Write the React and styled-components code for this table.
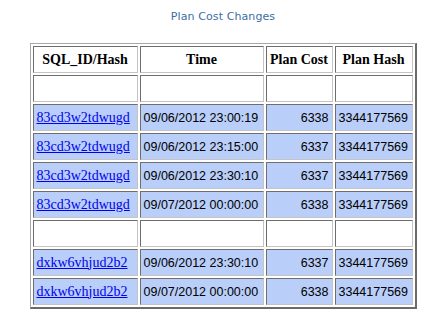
import React from 'react';
import styled, { createGlobalStyle } from 'styled-components';

const GlobalStyle = createGlobalStyle`
  html, body {
    margin: 0;
    padding: 0;
    background: #fff;
  }
`;

const Page = styled.div`
  width: 430px;
  height: 330px;
  box-sizing: border-box;
  padding: 10px 0 0 16px;
  display: flex;
  flex-direction: column;
  align-items: center;
`;

const Title = styled.div`
  font-family: "DejaVu Sans", Verdana, sans-serif;
  font-size: 11px;
  line-height: 13px;
  letter-spacing: 0.1px;
  color: #3a6ea5;
  margin-bottom: 20px;
`;

const Table = styled.table`
  border-collapse: separate;
  border-spacing: 2px;
  table-layout: fixed;
  border-top: 1px solid #a8a8a8;
  border-left: 1px solid #a8a8a8;
  border-right: 2px solid #6a6a6a;
  border-bottom: 2px solid #6a6a6a;
`;

const Row = styled.tr`
  background: ${(p) => (p.$blank ? '#fff' : '#b9cef8')};
`;

const Cell = styled.td`
  box-sizing: border-box;
  height: 27px;
  padding: 0 3px;
  border-top: 1px solid #6e6e6e;
  border-left: 1px solid #6e6e6e;
  border-right: 1px solid #c4c4c4;
  border-bottom: 1px solid #c4c4c4;
  white-space: nowrap;
  text-align: ${(p) => p.$align || 'left'};
  font-family: ${(p) => (p.$serif ? '"Liberation Serif", "Times New Roman", serif' : '"Liberation Sans", Arial, sans-serif')};
  font-size: ${(p) => (p.$serif ? '14px' : '12.5px')};
  color: #000;
`;

const HeadCell = styled(Cell).attrs({ as: 'th' })`
  font-family: "Liberation Serif", "Times New Roman", serif;
  font-size: 14px;
  font-weight: bold;
  text-align: center;
  background: #fff;
`;

const SqlLink = styled.a`
  color: #0000ee;
  text-decoration: underline;
`;

const rows = [
  null,
  ['83cd3w2tdwugd', '09/06/2012 23:00:19', '6338', '3344177569'],
  ['83cd3w2tdwugd', '09/06/2012 23:15:00', '6337', '3344177569'],
  ['83cd3w2tdwugd', '09/06/2012 23:30:10', '6337', '3344177569'],
  ['83cd3w2tdwugd', '09/07/2012 00:00:00', '6338', '3344177569'],
  null,
  ['dxkw6vhjud2b2', '09/06/2012 23:30:10', '6337', '3344177569'],
  ['dxkw6vhjud2b2', '09/07/2012 00:00:00', '6338', '3344177569'],
];

export default function App() {
  return (
    <>
      <GlobalStyle />
      <Page>
        <Title>Plan Cost Changes</Title>
        <Table>
          <colgroup>
            <col style={{ width: 105 }} />
            <col style={{ width: 124 }} />
            <col style={{ width: 67 }} />
            <col style={{ width: 78 }} />
          </colgroup>
          <thead>
            <tr>
              <HeadCell>SQL_ID/Hash</HeadCell>
              <HeadCell>Time</HeadCell>
              <HeadCell>Plan Cost</HeadCell>
              <HeadCell>Plan Hash</HeadCell>
            </tr>
          </thead>
          <tbody>
            {rows.map((r, i) =>
              r ? (
                <Row key={i}>
                  <Cell $serif>
                    <SqlLink href="#">{r[0]}</SqlLink>
                  </Cell>
                  <Cell>{r[1]}</Cell>
                  <Cell $align="right">{r[2]}</Cell>
                  <Cell>{r[3]}</Cell>
                </Row>
              ) : (
                <Row key={i} $blank>
                  <Cell />
                  <Cell />
                  <Cell />
                  <Cell />
                </Row>
              )
            )}
          </tbody>
        </Table>
      </Page>
    </>
  );
}
